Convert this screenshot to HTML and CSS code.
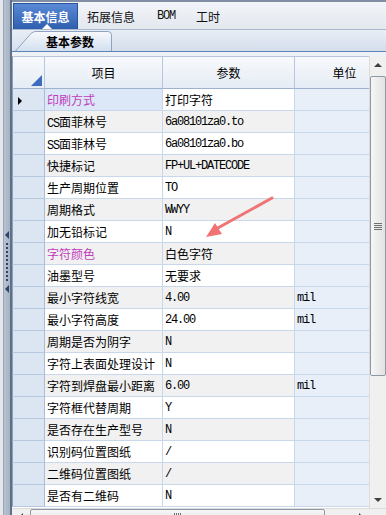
FILE: index.html
```html
<!DOCTYPE html>
<html lang="zh">
<head>
    <meta charset="UTF-8" />
    <title>基本信息</title>
    <link rel="stylesheet" href="styles.css">
</head>
<body>
    <div class="side">
        <div class="splitter">
            <span class="nub nub-top"></span>
            <span class="dots"></span>
            <span class="nub nub-bottom"></span>
        </div>
    </div>

    <div class="main">
        <div class="tabbar">
            <div class="tab active">基本信息</div>
            <div class="tab w2">拓展信息</div>
            <div class="tab w3 small">BOM</div>
            <div class="tab w4">工时</div>
        </div>

        <div class="subbar">
            <div class="subtab">
                <svg class="subtab-bg" width="98" height="20" viewBox="0 0 98 20">
                    <defs>
                        <linearGradient id="tg" x1="0" y1="0" x2="0" y2="1">
                            <stop offset="0" stop-color="#f7f9fc"/>
                            <stop offset="1" stop-color="#d3dfef"/>
                        </linearGradient>
                    </defs>
                    <path d="M0.5 20 L16 2.5 Q18 0.5 21 0.5 L93 0.5 Q96.5 0.5 96.5 4 L96.5 20" fill="url(#tg)" stroke="#8fa3c0"/>
                </svg>
                <span>基本参数</span>
            </div>
        </div>

        <div class="grid-area">
            <div class="grid-wrap">
                <table class="grid">
                    <colgroup>
                        <col class="c-ind"><col class="c-item"><col class="c-val"><col class="c-unit">
                    </colgroup>
                    <thead>
                        <tr>
                            <th class="corner"><span class="corner-mark"></span></th>
                            <th>项目</th>
                            <th>参数</th>
                            <th>单位</th>
                        </tr>
                    </thead>
                    <tbody>
                        <tr class="current"><td class="ind"><span class="arrow"></span></td><td class="item pink">印刷方式</td><td class="val">打印字符</td><td class="unit"></td></tr>
                        <tr class="alt"><td class="ind"></td><td class="item"><span class="lat">CS</span>面菲林号</td><td class="val mono">6a08101za0.to</td><td class="unit"></td></tr>
                        <tr><td class="ind"></td><td class="item"><span class="lat">SS</span>面菲林号</td><td class="val mono">6a08101za0.bo</td><td class="unit"></td></tr>
                        <tr class="alt"><td class="ind"></td><td class="item">快捷标记</td><td class="val mono">FP+UL+DATECODE</td><td class="unit"></td></tr>
                        <tr><td class="ind"></td><td class="item">生产周期位置</td><td class="val mono">TO</td><td class="unit"></td></tr>
                        <tr class="alt"><td class="ind"></td><td class="item">周期格式</td><td class="val mono">WWYY</td><td class="unit"></td></tr>
                        <tr><td class="ind"></td><td class="item">加无铅标记</td><td class="val mono">N</td><td class="unit"></td></tr>
                        <tr class="alt"><td class="ind"></td><td class="item pink">字符颜色</td><td class="val">白色字符</td><td class="unit"></td></tr>
                        <tr><td class="ind"></td><td class="item">油墨型号</td><td class="val">无要求</td><td class="unit"></td></tr>
                        <tr class="alt"><td class="ind"></td><td class="item">最小字符线宽</td><td class="val mono">4.00</td><td class="unit mono">mil</td></tr>
                        <tr><td class="ind"></td><td class="item">最小字符高度</td><td class="val mono">24.00</td><td class="unit mono">mil</td></tr>
                        <tr class="alt"><td class="ind"></td><td class="item">周期是否为阴字</td><td class="val mono">N</td><td class="unit"></td></tr>
                        <tr><td class="ind"></td><td class="item">字符上表面处理设计</td><td class="val mono">N</td><td class="unit"></td></tr>
                        <tr class="alt"><td class="ind"></td><td class="item">字符到焊盘最小距离</td><td class="val mono">6.00</td><td class="unit mono">mil</td></tr>
                        <tr><td class="ind"></td><td class="item">字符框代替周期</td><td class="val mono">Y</td><td class="unit"></td></tr>
                        <tr class="alt"><td class="ind"></td><td class="item">是否存在生产型号</td><td class="val mono">N</td><td class="unit"></td></tr>
                        <tr><td class="ind"></td><td class="item">识别码位置图纸</td><td class="val mono">/</td><td class="unit"></td></tr>
                        <tr class="alt"><td class="ind"></td><td class="item">二维码位置图纸</td><td class="val mono">/</td><td class="unit"></td></tr>
                        <tr><td class="ind"></td><td class="item">是否有二维码</td><td class="val mono">N</td><td class="unit"></td></tr>
                    </tbody>
                </table>
            </div>

            <div class="vscroll">
                <div class="vbtn"><span class="tri-up"></span></div>
                <div class="vthumb"><span class="grip-h"></span></div>
                <div class="vfill"></div>
                <div class="vbtn"><span class="tri-down"></span></div>
            </div>
        </div>

        <div class="hscroll">
            <div class="hbtn"><span class="tri-left"></span></div>
            <div class="hthumb"><span class="grip-v"></span></div>
            <div class="hfill"></div>
            <div class="hbtn"><span class="tri-right"></span></div>
            <div class="hcorner"></div>
        </div>
    </div>

    <svg class="annot" width="386" height="515" viewBox="0 0 386 515">
        <line x1="272" y1="198" x2="216" y2="229" stroke="#f07474" stroke-width="3" stroke-linecap="round"/>
        <polygon points="206,237 215,223 222,234" fill="#f07474"/>
    </svg>
</body>
</html>
```

FILE: styles.css
```css
* {
    margin: 0;
    padding: 0;
    box-sizing: border-box;
}

body {
    width: 386px;
    height: 515px;
    overflow: hidden;
    display: flex;
    position: relative;
    background: #eef1f5;
    font-family: "Noto Sans CJK SC", sans-serif;
    font-size: 12px;
    color: #000;
}

/* Left splitter */
.side {
    width: 12px;
    background: #e4e7ec;
    padding-left: 3px;
    display: flex;
}

.splitter {
    flex: 1;
    border-left: 1px solid #9aa4b2;
    border-right: 2px solid #5f7088;
    background: linear-gradient(to right, #b9c3d1, #a5b2c4);
    display: flex;
    flex-direction: column;
    align-items: flex-start;
    padding-top: 231px;
}

.nub {
    width: 0;
    height: 0;
    border-top: 4px solid transparent;
    border-bottom: 4px solid transparent;
    border-right: 4px solid #2e4466;
    margin-left: 1px;
}

.dots {
    width: 2px;
    height: 38px;
    margin: 4px 0 4px 2px;
    background: repeating-linear-gradient(to bottom, #2e4466 0 2px, transparent 2px 4px);
}

/* Main panel */
.main {
    flex: 1;
    display: flex;
    flex-direction: column;
    min-width: 0;
}

.tabbar {
    height: 30px;
    flex: none;
    display: flex;
    align-items: flex-end;
    padding-left: 1px;
    border-top: 2px solid #7f8ea4;
    border-bottom: 1px solid #a9b8cc;
    background: linear-gradient(#f2f4f8, #e3e8ef);
}

.tab {
    height: 26px;
    display: flex;
    align-items: center;
    justify-content: center;
    color: #111;
    font-size: 12px;
}

.tab.active {
    width: 65px;
    color: #fff;
    font-weight: bold;
    background: linear-gradient(#5a8ad6, #2e5fae);
    border: 1px solid #2b5196;
    border-bottom: none;
    position: relative;
}

.tab.active::after {
    content: '';
    position: absolute;
    left: 28px;
    bottom: 0;
    border-left: 5px solid transparent;
    border-right: 5px solid transparent;
    border-bottom: 5px solid #fff;
}

.tab.w2 { width: 66px; }
.tab.w3 { width: 44px; }
.tab.w4 { width: 40px; }

.tab.small {
    font-family: "Liberation Mono", monospace;
    font-size: 12px;
    letter-spacing: -1.2px;
}

.subbar {
    height: 22px;
    flex: none;
    display: flex;
    align-items: flex-end;
    padding-left: 3px;
    border-bottom: 1px solid #5d82b8;
    background: linear-gradient(#e9eef6, #d4deec);
}

.subtab {
    width: 98px;
    height: 20px;
    position: relative;
    display: flex;
    align-items: center;
    justify-content: center;
    padding-left: 12px;
    font-weight: bold;
}

.subtab-bg {
    position: absolute;
    left: 0;
    top: 0;
}

.subtab span {
    position: relative;
}

/* Grid */
.grid-area {
    flex: none;
    height: 452px;
    display: flex;
    margin-top: 4px;
    background: #fff;
}

.grid-wrap {
    flex: 1;
    overflow: hidden;
    min-width: 0;
}

.grid {
    width: 383px;
    table-layout: fixed;
    border-collapse: separate;
    border-spacing: 0;
}

.c-ind { width: 33px; }
.c-item { width: 118px; }
.c-val { width: 132px; }
.c-unit { width: 100px; }

.grid th {
    height: 33px;
    font-weight: normal;
    font-size: 12px;
    text-align: center;
    background: linear-gradient(#f7f9fc, #e6ecf5);
    border-right: 1px solid #b7c6db;
    border-bottom: 1px solid #9fb2cd;
    border-top: 1px solid #b7c6db;
}

.grid th.corner {
    position: relative;
    border-left: 1px solid #8d9fba;
}

.corner-mark {
    position: absolute;
    right: 2px;
    bottom: 2px;
    width: 0;
    height: 0;
    border-left: 11px solid transparent;
    border-bottom: 11px solid #3c6cc0;
}

.grid td {
    height: 22px;
    padding: 0 2px;
    white-space: nowrap;
    overflow: hidden;
    border-bottom: 1px solid #c9d7ea;
    border-right: 1px solid #c9d7ea;
    background: #fff;
}

.grid tr.alt td {
    background: #f1f1f1;
}

.grid td.ind,
.grid tr.alt td.ind {
    background: #dce6f3;
    border-left: 1px solid #8d9fba;
    border-right: 1px solid #aabcd6;
    border-bottom: 1px solid #b8c8de;
    padding-left: 5px;
}

.grid td.unit,
.grid tr.alt td.unit {
    background: #e8eff9;
}

.grid tr.current td.item {
    background: #dce8f8;
}

.arrow {
    display: inline-block;
    width: 0;
    height: 0;
    border-top: 4px solid transparent;
    border-bottom: 4px solid transparent;
    border-left: 4px solid #000;
}

.pink {
    color: #c03cbc;
}

.lat,
.mono {
    font-family: "Liberation Mono", monospace;
    font-size: 12px;
    letter-spacing: -1.2px;
}

/* Scrollbars */
.vscroll {
    width: 17px;
    display: flex;
    flex-direction: column;
    background: #f0f0f0;
    border-left: 1px solid #dcdcdc;
}

.vbtn {
    height: 17px;
    display: flex;
    align-items: center;
    justify-content: center;
}

.vthumb {
    height: 300px;
    margin-top: 3px;
    border: 1px solid #8e99a8;
    border-radius: 2px;
    background: linear-gradient(to right, #f6f6f6, #e2e2e2);
    display: flex;
    align-items: center;
    justify-content: center;
}

.vfill {
    flex: 1;
}

.grip-h {
    width: 8px;
    height: 7px;
    background: repeating-linear-gradient(to bottom, #6f6f6f 0 1px, transparent 1px 2px);
}

.tri-up {
    border-left: 4px solid transparent;
    border-right: 4px solid transparent;
    border-bottom: 4px solid #3f3f3f;
}

.tri-down {
    border-left: 4px solid transparent;
    border-right: 4px solid transparent;
    border-top: 4px solid #3f3f3f;
}

.hscroll {
    height: 17px;
    flex: none;
    display: flex;
    background: #f0f0f0;
    border-top: 1px solid #dcdcdc;
}

.hbtn {
    width: 17px;
    display: flex;
    align-items: center;
    justify-content: center;
}

.hthumb {
    width: 295px;
    margin-left: 1px;
    border: 1px solid #8e99a8;
    border-radius: 2px;
    background: linear-gradient(#f6f6f6, #e2e2e2);
    display: flex;
    align-items: center;
    justify-content: center;
}

.hfill {
    flex: 1;
}

.hcorner {
    width: 17px;
}

.grip-v {
    width: 7px;
    height: 8px;
    background: repeating-linear-gradient(to right, #6f6f6f 0 1px, transparent 1px 2px);
}

.tri-left {
    border-top: 4px solid transparent;
    border-bottom: 4px solid transparent;
    border-right: 4px solid #3f3f3f;
}

.tri-right {
    border-top: 4px solid transparent;
    border-bottom: 4px solid transparent;
    border-left: 4px solid #3f3f3f;
}

/* Annotation arrow drawn over the grid */
.annot {
    position: absolute;
    left: 0;
    top: 0;
    pointer-events: none;
}
```
